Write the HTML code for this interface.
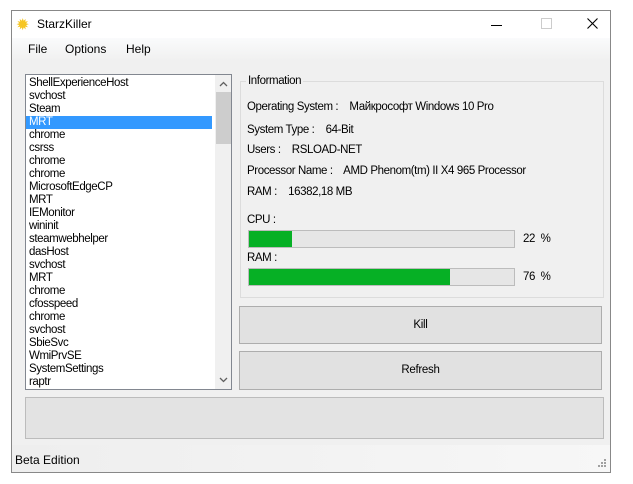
<!DOCTYPE html><html><head><style>
body{margin:0;width:633px;height:484px;background:#fff;font-family:"Liberation Sans",sans-serif;font-size:12px;color:#000;position:relative;overflow:hidden}
.a{position:absolute}
#win{left:11px;top:10px;width:598px;height:461px;border:1px solid #888;background:#f0f0f0}
#title{left:0;top:0;width:598px;height:27px;background:#fff}
#menu{left:0;top:27px;width:598px;height:23px;background:linear-gradient(#fafbfc,#f0f0f0)}
#list{left:13px;top:63px;width:205px;height:314px;border:1px solid #828790;background:#fff;overflow:hidden}
#items{padding-top:2px}
#items div{height:13px;line-height:13px;padding-left:3px;font-size:11.5px;letter-spacing:-0.4px}
.sel{background:#3399ff;color:#fff;width:183px}
#sb{left:189px;top:0;width:17px;height:314px;background:#f0f0f0}
.btn{background:#e1e1e1;border:1px solid #adadad;text-align:center;font-size:11.5px;letter-spacing:-0.3px}
.bar{left:9px;width:265px;height:16px;border:1px solid #bcbcbc;background:#e6e6e6}
.bar i{display:block;height:16px;background:#06b025}
.t{font-size:11.5px;letter-spacing:-0.4px;white-space:nowrap}
</style></head><body>
<div id="win" class="a">
<div id="title" class="a">
 <span class="a" style="left:4px;top:4px;font-size:16px;color:#f6c623">✹</span>
 <span class="a" style="left:25px;top:6px;font-size:12px">StarzKiller</span>
 <span class="a" style="left:479px;top:14px;width:11px;height:1px;background:#000"></span>
 <span class="a" style="left:529px;top:7px;width:9px;height:9px;border:1px solid #ccc"></span>
 <svg class="a" style="left:575px;top:7px" width="11" height="11"><path d="M0.5 0.5L10.5 10.5M10.5 0.5L0.5 10.5" stroke="#000" stroke-width="1.1"/></svg>
</div>
<div id="menu" class="a">
 <span class="a" style="left:16px;top:4px">File</span>
 <span class="a" style="left:53px;top:4px">Options</span>
 <span class="a" style="left:114px;top:4px">Help</span>
</div>
<div id="list" class="a"><div id="items">
<div>ShellExperienceHost</div><div>svchost</div><div>Steam</div><div class="sel">MRT</div><div>chrome</div><div>csrss</div><div>chrome</div><div>chrome</div><div>MicrosoftEdgeCP</div><div>MRT</div><div>IEMonitor</div><div>wininit</div><div>steamwebhelper</div><div>dasHost</div><div>svchost</div><div>MRT</div><div>chrome</div><div>cfosspeed</div><div>chrome</div><div>svchost</div><div>SbieSvc</div><div>WmiPrvSE</div><div>SystemSettings</div><div>raptr</div></div>
<div id="sb" class="a">
<svg class="a" style="left:4px;top:6px" width="9" height="6"><path d="M1 5L4.5 1.5L8 5" stroke="#606060" stroke-width="1.3" fill="none"/></svg>
<span class="a" style="left:1px;top:17px;width:15px;height:52px;background:#cdcdcd"></span>
<svg class="a" style="left:4px;top:302px" width="9" height="6"><path d="M1 1L4.5 4.5L8 1" stroke="#606060" stroke-width="1.3" fill="none"/></svg>
</div>
</div>
<div class="a" style="left:228px;top:70px;width:362px;height:215px;border:1px solid #dcdcdc"></div>
<span class="a t" style="left:234px;top:64px;background:#f0f0f0;padding:0 2px">Information</span>
<span class="a t" style="left:235px;top:90px">Operating System :&nbsp;&nbsp;&nbsp; Майкрософт Windows 10 Pro</span>
<span class="a t" style="left:235px;top:113px">System Type :&nbsp;&nbsp;&nbsp; 64-Bit</span>
<span class="a t" style="left:235px;top:133px">Users :&nbsp;&nbsp;&nbsp; RSLOAD-NET</span>
<span class="a t" style="left:235px;top:154px">Processor Name :&nbsp;&nbsp;&nbsp; AMD Phenom(tm) II X4 965 Processor</span>
<span class="a t" style="left:235px;top:175px">RAM :&nbsp;&nbsp;&nbsp; 16382,18 MB</span>
<span class="a t" style="left:235px;top:203px">CPU :</span>
<div class="a bar" style="left:236px;top:219px"><i style="width:43px"></i></div>
<span class="a t" style="left:511px;top:222px">22&nbsp; %</span>
<span class="a t" style="left:235px;top:241px">RAM :</span>
<div class="a bar" style="left:236px;top:257px"><i style="width:201px"></i></div>
<span class="a t" style="left:511px;top:260px">76&nbsp; %</span>
<div class="a btn" style="left:227px;top:295px;width:361px;height:36px;line-height:36px">Kill</div>
<div class="a btn" style="left:227px;top:340px;width:361px;height:37px;line-height:37px">Refresh</div>
<div class="a" style="left:13px;top:386px;width:577px;height:40px;border:1px solid #bcbcbc;background:#e3e3e3"></div>
<div class="a" style="left:0;top:434px;width:598px;height:27px;background:linear-gradient(90deg,#eeeeee,#f7f7f7)">
 <span class="a" style="left:3px;top:8px">Beta Edition</span>
 <svg class="a" style="left:586px;top:14px" width="9" height="9"><g fill="#a0a0a0"><rect x="6" y="0" width="2" height="2"/><rect x="3" y="3" width="2" height="2"/><rect x="6" y="3" width="2" height="2"/><rect x="0" y="6" width="2" height="2"/><rect x="3" y="6" width="2" height="2"/><rect x="6" y="6" width="2" height="2"/></g></svg>
</div>
</div>
</body></html>
